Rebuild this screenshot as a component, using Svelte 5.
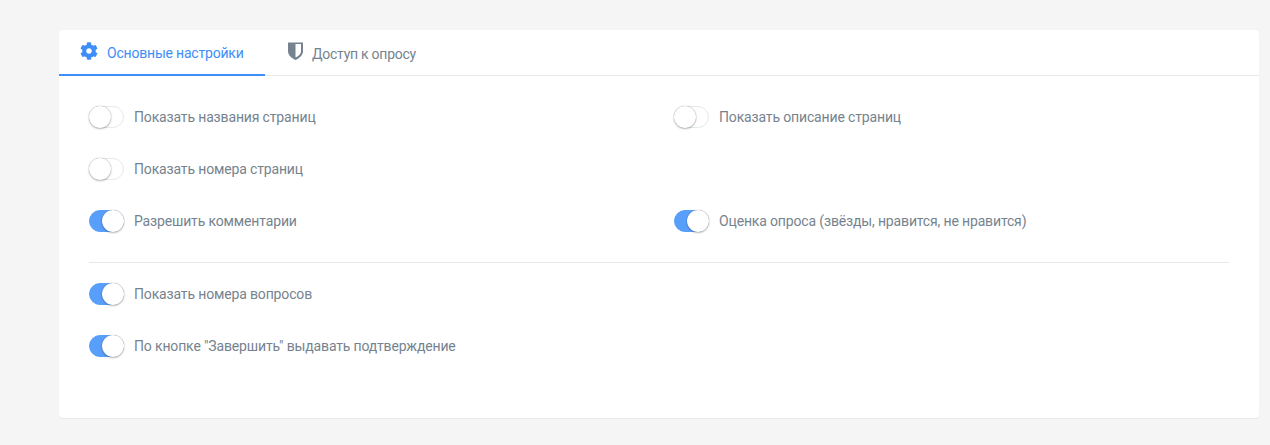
<script lang="ts">
	const topRows = [
		{ label: 'Показать названия страниц', on: false },
		{ label: 'Показать описание страниц', on: false },
		{ label: 'Показать номера страниц', on: false },
		null,
		{ label: 'Разрешить комментарии', on: true },
		{ label: 'Оценка опроса (звёзды, нравится, не нравится)', on: true }
	];
	const bottomRows = [
		{ label: 'Показать номера вопросов', on: true },
		{ label: 'По кнопке "Завершить" выдавать подтверждение', on: true }
	];
</script>

{#snippet toggle(row: { label: string; on: boolean })}
	<label class="row">
		<span class="switch {row.on ? 'on' : ''}"><span class="knob"></span></span>
		<span class="label">{row.label}</span>
	</label>
{/snippet}

<div class="page">
	<div class="card">
		<div class="tabs">
			<div class="tab active">
				<svg class="icon gear" viewBox="0 0 512 512" aria-hidden="true">
					<path fill="currentColor" d="M487.4 315.7l-42.6-24.6c4.3-23.2 4.3-47 0-70.2l42.6-24.6c4.9-2.8 7.1-8.6 5.5-14-11.1-35.6-30-67.8-54.7-94.6-3.8-4.1-10-5.1-14.8-2.3L380.8 110c-17.9-15.4-38.5-27.3-60.8-35.1V25.8c0-5.6-3.9-10.5-9.4-11.7-36.7-8.2-74.3-7.8-109.2 0-5.5 1.2-9.4 6.1-9.4 11.7V75c-22.2 7.9-42.8 19.8-60.8 35.1L88.7 85.5c-4.9-2.8-11-1.9-14.8 2.3-24.7 26.7-43.6 58.9-54.7 94.6-1.7 5.4.6 11.2 5.5 14L67.3 221c-4.3 23.2-4.3 47 0 70.2l-42.6 24.6c-4.9 2.8-7.1 8.6-5.5 14 11.1 35.6 30 67.8 54.7 94.6 3.8 4.1 10 5.1 14.8 2.3l42.6-24.6c17.9 15.4 38.5 27.3 60.8 35.1v49.2c0 5.6 3.9 10.5 9.4 11.7 36.7 8.2 74.3 7.8 109.2 0 5.5-1.2 9.4-6.1 9.4-11.7v-49.2c22.2-7.9 42.8-19.8 60.8-35.1l42.6 24.6c4.9 2.8 11 1.9 14.8-2.3 24.7-26.7 43.6-58.9 54.7-94.6 1.5-5.5-.7-11.3-5.6-14.1zM256 336c-44.1 0-80-35.9-80-80s35.9-80 80-80 80 35.9 80 80-35.9 80-80 80z"/>
				</svg>
				<span>Основные настройки</span>
			</div>
			<div class="tab">
				<svg class="icon shield" viewBox="0 0 15 18" aria-hidden="true">
					<path fill="currentColor" d="M0 0.5 H15 V9 C15 13 12 16 7.5 18 C3 16 0 13 0 9 Z"/>
					<path fill="#fff" d="M7.5 2 H13 V9 C13 11.8 11 14 7.5 15.6 Z"/>
				</svg>
				<span>Доступ к опросу</span>
			</div>
		</div>

		<div class="body">
			<div class="grid">
				{#each topRows as row}
					{#if row}
						{@render toggle(row)}
					{:else}
						<div></div>
					{/if}
				{/each}
			</div>
			<hr />
			<div class="grid">
				{#each bottomRows as row}
					<div class="full">{@render toggle(row)}</div>
				{/each}
			</div>
		</div>
	</div>
</div>

<style>
	:global(body) {
		margin: 0;
		background: #f5f5f5;
	}

	.page {
		padding: 30px 11px 27px 59px;
		font-family: Roboto, "Liberation Sans", sans-serif;
		font-size: 14px;
		letter-spacing: -0.15px;
		color: #76838f;
	}

	.card {
		height: 388px;
		box-sizing: border-box;
		background: #fff;
		border-radius: 4px;
		box-shadow: 0 1px 1px rgba(0, 0, 0, 0.05);
	}

	.tabs {
		display: flex;
		height: 46px;
		box-sizing: border-box;
		border-bottom: 1px solid #e4eaec;
	}

	.tab {
		display: flex;
		align-items: center;
		height: 46px;
		box-sizing: border-box;
		padding: 0 21px 0 23px;
		gap: 9px;
		line-height: 20px;
		white-space: nowrap;
		letter-spacing: -0.25px;
	}

	.tab span {
		position: relative;
		top: 1px;
	}

	.tab.active {
		width: 206px;
		padding-left: 21px;
		letter-spacing: -0.2px;
		color: #3e8ef7;
		border-bottom: 2px solid #3e8ef7;
	}

	.icon {
		display: block;
		margin-top: -5px;
	}

	.gear {
		width: 18px;
		height: 18px;
		margin-top: -3px;
	}

	.shield {
		width: 15px;
		height: 18px;
	}

	.body {
		padding: 30px 30px 0;
	}

	.grid {
		display: grid;
		grid-template-columns: repeat(2, 1fr);
		column-gap: 30px;
		row-gap: 30px;
	}

	.full {
		grid-column: 1 / -1;
	}

	.row {
		display: flex;
		align-items: center;
		height: 22px;
		gap: 10px;
	}

	.switch {
		position: relative;
		display: block;
		width: 35px;
		height: 22px;
		box-sizing: border-box;
		border: 1px solid #e4eaec;
		border-radius: 11px;
		background: #fff;
		flex: none;
	}

	.switch.on {
		background: #589ffc;
		border-color: #589ffc;
	}

	.knob {
		position: absolute;
		top: -1px;
		left: -1px;
		width: 22px;
		height: 22px;
		border-radius: 50%;
		background: #fff;
		box-shadow: 0 0 1px rgba(0, 0, 0, 0.45), 0 1px 2px rgba(0, 0, 0, 0.25);
	}

	.on .knob {
		left: 12px;
	}

	hr {
		margin: 30px 0 20px;
		border: 0;
		border-top: 1px solid #e4eaec;
	}
</style>
